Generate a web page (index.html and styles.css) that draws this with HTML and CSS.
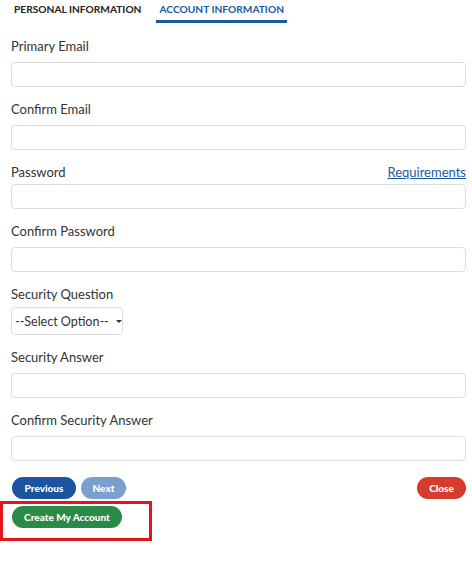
FILE: index.html
```html
<!DOCTYPE html>
<html>
<head>
<meta charset="utf-8">
<link rel="stylesheet" href="styles.css">
</head>
<body>
<div class="page">
  <div class="tabs">
    <div class="tab">PERSONAL INFORMATION</div>
    <div class="tab active">ACCOUNT INFORMATION</div>
  </div>
  <form class="form">
    <div class="field">
      <label class="label">Primary Email</label>
      <div class="input"></div>
    </div>
    <div class="field">
      <label class="label">Confirm Email</label>
      <div class="input"></div>
    </div>
    <div class="field">
      <div class="label-row">
        <label class="label">Password</label>
        <a class="link">Requirements</a>
      </div>
      <div class="input"></div>
    </div>
    <div class="field">
      <label class="label">Confirm Password</label>
      <div class="input"></div>
    </div>
    <div class="field">
      <label class="label label-select">Security Question</label>
      <div class="select"><span>--Select Option--</span><span class="caret"></span></div>
    </div>
    <div class="field">
      <label class="label">Security Answer</label>
      <div class="input"></div>
    </div>
    <div class="field">
      <label class="label">Confirm Security Answer</label>
      <div class="input"></div>
    </div>
    <div class="actions">
      <div class="nav">
        <span class="btn btn-prev">Previous</span>
        <span class="btn btn-next">Next</span>
      </div>
      <span class="btn btn-close">Close</span>
    </div>
    <div class="highlight">
      <span class="btn btn-create">Create My Account</span>
    </div>
  </form>
</div>
</body>
</html>
```
FILE: styles.css
```css
* { box-sizing: border-box; }
body {
  margin: 0;
  background: #fff;
  font-family: "Lato", "Inter", sans-serif;
  color: #333;
}
.page {
  padding: 0 6px 0 11px;
}
.tabs {
  display: flex;
  gap: 12px;
}
.tab {
  padding: 3px 3px 4px;
  font-size: 10.2px;
  line-height: 13px;
  font-weight: 700;
  color: #222;
  white-space: nowrap;
  border-bottom: 3px solid transparent;
}
.tab.active {
  color: #1a5aa3;
  border-bottom-color: #1a5aa3;
}
.form {
  padding-top: 15px;
}
.field {
  display: flex;
  flex-direction: column;
  margin-bottom: 14px;
}
.label {
  font-size: 13px;
  line-height: 16px;
  color: #333;
  margin-bottom: 8px;
}
.label-row {
  display: flex;
  justify-content: space-between;
  align-items: flex-start;
  margin-bottom: 4px;
}
.label-row .label { margin-bottom: 0; }
.link {
  font-size: 13px;
  line-height: 16px;
  color: #1a5aa3;
  text-decoration: underline;
}
.label-select { margin-bottom: 5px; }
.input {
  height: 25px;
  border: 1px solid #dcdcdc;
  border-radius: 4px;
  background: #fff;
}
.select {
  width: 112px;
  height: 28px;
  border: 1px solid #dcdcdc;
  border-radius: 4px;
  display: flex;
  align-items: center;
  padding-left: 3px;
  gap: 7px;
  font-size: 12.5px;
  white-space: nowrap;
  color: #333;
}
.caret {
  width: 0;
  height: 0;
  border-left: 3.5px solid transparent;
  border-right: 3.5px solid transparent;
  border-top: 3.5px solid #333;
}
.actions {
  display: flex;
  justify-content: space-between;
  padding-top: 2px;
}
.nav {
  display: flex;
  gap: 5px;
  padding-left: 1px;
}
.btn {
  display: inline-flex;
  align-items: center;
  justify-content: center;
  height: 22px;
  border-radius: 11px;
  font-size: 10px;
  font-weight: 900;
  color: #fff;
  white-space: nowrap;
}
.btn-prev { background: #1b54a0; width: 64px; }
.btn-next { background: #7b9fcc; width: 45px; }
.btn-close { background: #d63b2d; width: 49px; }
.btn-create { background: #2b8a45; width: 110px; }
.highlight {
  margin: 2px 0 0 -11px;
  width: 152px;
  height: 40px;
  border: 3px solid #e3141b;
  padding: 1px 0 0 9px;
}
```
